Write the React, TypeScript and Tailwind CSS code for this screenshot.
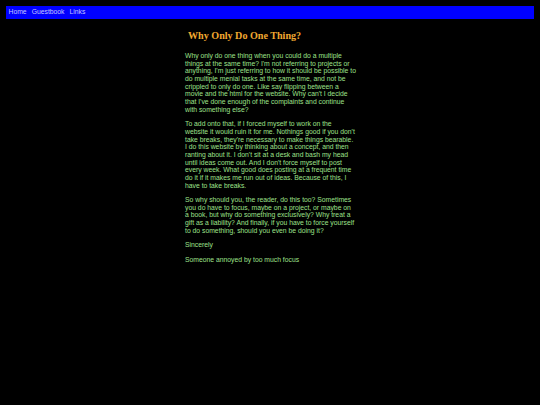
export default function App() {
  const paras = [
    "Why only do one thing when you could do a multiple things at the same time? I'm not referring to projects or anything, I'm just referring to how it should be possible to do multiple menial tasks at the same time, and not be crippled to only do one. Like say flipping between a movie and the html for the website. Why can't I decide that I've done enough of the complaints and continue with something else?",
    "To add onto that, if I forced myself to work on the website it would ruin it for me. Nothings good if you don't take breaks, they're necessary to make things bearable. I do this website by thinking about a concept, and then ranting about it. I don't sit at a desk and bash my head until ideas come out. And I don't force myself to post every week. What good does posting at a frequent time do it if it makes me run out of ideas. Because of this, I have to take breaks.",
    "So why should you, the reader, do this too? Sometimes you do have to focus, maybe on a project, or maybe on a book, but why do something exclusively? Why treat a gift as a liability? And finally, if you have to force yourself to do something, should you even be doing it?",
    "Sincerely",
    "Someone annoyed by too much focus",
  ]

  return (
    <div className="min-h-[405px] bg-black pt-[6px] font-['Liberation_Sans',Arial,sans-serif]">
      <nav className="mx-[6px] flex h-[13px] items-center gap-[5px] bg-[#0000ff] px-[2.5px] text-[6.8px] text-[#c4c4ff]">
        <a>Home</a>
        <a>Guestbook</a>
        <a>Links</a>
      </nav>
      <main className="mx-auto w-[172px] pl-[1px]">
        <h2 className="mt-[11px] pl-[3px] font-['Liberation_Serif','Times_New_Roman',serif] text-[10.1px] font-bold leading-[12px] text-[#f0a830]">
          Why Only Do One Thing?
        </h2>
        <div className="mt-[10px] flex flex-col gap-[7px] text-[6.8px] leading-[7.65px] text-[#9ee08a]">
          {paras.map((p) => (
            <p key={p}>{p}</p>
          ))}
        </div>
      </main>
    </div>
  )
}
